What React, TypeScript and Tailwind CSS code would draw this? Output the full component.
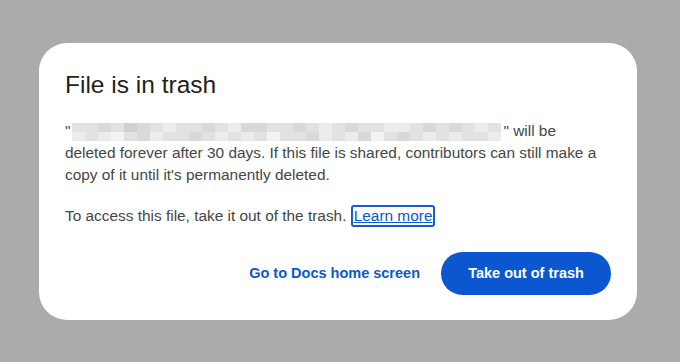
const shades = [
  "bg-[#ececec]",
  "bg-[#e2e2e2]",
  "bg-[#d9d9d9]",
  "bg-[#d0d0d0]",
  "bg-[#f4f4f4]",
];

// pixelated file name, one digit per block
const blurRows = [
  "112132101121022112101211001212101",
  "010412011210101411201024121010110",
];

function BlurredName() {
  return (
    <span className="inline-flex flex-col align-top h-[22px] pt-[3px] mx-[2px]">
      {blurRows.map((row, r) => (
        <span key={r} className="flex">
          {row.split("").map((d, i) => (
            <span key={i} className={`w-[13px] h-[9px] ${shades[Number(d)]}`} />
          ))}
        </span>
      ))}
    </span>
  );
}

export default function App() {
  return (
    <div
      className="w-[680px] h-[362px] bg-[#ababab] pt-[43px] pl-[39px]"
      style={{ fontFamily: '"Liberation Sans", Arial, sans-serif' }}
    >
      <div className="w-[598px] h-[277px] rounded-[28px] bg-white px-[26px] pt-[26px] pb-[25px] flex flex-col">
        <h1 className="text-[24.5px] leading-[32px] text-[#1f1f1f]">File is in trash</h1>

        <p className="mt-[19px] w-[540px] text-[15.4px] leading-[22px] text-[#444746]">
          "<BlurredName />" will be deleted forever after 30 days. If this file is shared,
          contributors can still make a copy of it until it's permanently deleted.
        </p>

        <p className="mt-[19px] text-[15.4px] leading-[22px] text-[#444746]">
          To access this file, take it out of the trash.{" "}
          <a
            href="#"
            className="inline-block leading-[16px] px-[1px] py-[1px] border-2 border-[#1a5bd0] rounded-[3px] text-[#0b57d0] underline"
          >
            Learn more
          </a>
        </p>

        <div className="mt-auto flex items-center justify-end gap-[21px]">
          <button className="text-[14.5px] font-bold text-[#0b57d0]">Go to Docs home screen</button>
          <button className="w-[170px] h-[43px] rounded-full bg-[#0b57d0] text-white text-[14.5px] font-bold">
            Take out of trash
          </button>
        </div>
      </div>
    </div>
  );
}
